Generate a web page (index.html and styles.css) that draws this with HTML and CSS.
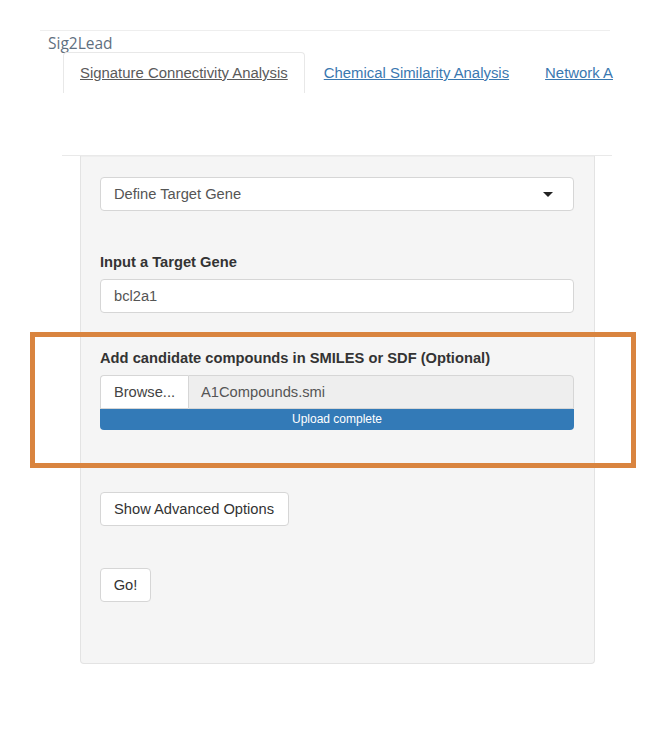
FILE: index.html
```html
<!DOCTYPE html>
<html lang="en">
<head>
<meta charset="utf-8">
<title>Sig2Lead</title>
<link rel="stylesheet" href="styles.css">
</head>
<body>
<header class="header">
  <div class="brand">Sig2Lead</div>
  <nav class="tabs">
    <a class="tab active">Signature Connectivity Analysis</a>
    <a class="tab">Chemical Similarity Analysis</a>
    <a class="tab last">Network A</a>
  </nav>
</header>
<div class="divider"></div>
<main class="well">
  <div class="select">
    <span>Define Target Gene</span>
    <span class="caret"></span>
  </div>
  <label class="label label-gene">Input a Target Gene</label>
  <div class="input">bcl2a1</div>
  <label class="label label-file">Add candidate compounds in SMILES or SDF (Optional)</label>
  <div class="file-row">
    <div class="browse">Browse...</div>
    <div class="filename">A1Compounds.smi</div>
  </div>
  <div class="progress">Upload complete</div>
  <button class="btn btn-adv">Show Advanced Options</button>
  <button class="btn btn-go">Go!</button>
</main>
<div class="highlight"></div>
</body>
</html>
```
FILE: styles.css
```css
* { box-sizing: border-box; }

body {
  margin: 0;
  background: #ffffff;
  font-family: "Liberation Sans", Arial, sans-serif;
  font-size: 14.7px;
  color: #333;
  position: relative;
  min-height: 740px;
}

.header {
  margin: 30px 0 0 40px;
  width: 570px;
  border-top: 1px solid #eeeeee;
}

.brand {
  font-family: "Open Sans", "DejaVu Sans", sans-serif;
  font-size: 15.5px;
  line-height: 18px;
  padding: 3px 0 0 8px;
  color: #5f6f80;
  height: 21px;
}

.tabs {
  display: flex;
  padding-left: 23px;
  white-space: nowrap;
}

.tab {
  display: block;
  flex: none;
  padding: 10px 16px;
  line-height: 20px;
  margin-right: 2px;
  border: 1px solid transparent;
  border-bottom: none;
  border-radius: 4px 4px 0 0;
  color: #3a78b0;
  text-decoration: underline;
  font-size: 14.9px;
}

.tab.last {
  padding-right: 0;
  margin-right: 0;
}

.tab.active {
  color: #5a5a5a;
  border-color: #e8e8e8;
  background: #ffffff;
}

.divider {
  margin: 62px 0 0 62px;
  width: 550px;
  border-top: 1px solid #e9e9e9;
}

.well {
  display: block;
  margin-left: 80px;
  width: 515px;
  height: 508px;
  padding: 20px 20px 0 19px;
  background: #f5f5f5;
  border: 1px solid #e3e3e3;
  border-top: none;
  border-radius: 0 0 4px 4px;
  box-shadow: inset 0 1px 1px rgba(0,0,0,0.03);
}

.select, .input {
  height: 34px;
  background: #ffffff;
  border: 1px solid #d6d6d6;
  border-radius: 4px;
  padding: 0 20px 0 13px;
  display: flex;
  align-items: center;
  color: #555555;
}

.select {
  justify-content: space-between;
  margin-top: 1px;
  margin-bottom: 41px;
}

.caret {
  width: 0;
  height: 0;
  border-left: 5px solid transparent;
  border-right: 5px solid transparent;
  border-top: 5px solid #222;
}

.label {
  display: block;
  font-weight: bold;
  line-height: 20px;
  margin-bottom: 7px;
  color: #333;
}

.input { margin-bottom: 35px; }

.file-row {
  display: flex;
  height: 34px;
}

.browse {
  width: 88px;
  border: 1px solid #d6d6d6;
  border-right: none;
  border-radius: 4px 0 0 0;
  background: #ffffff;
  display: flex;
  align-items: center;
  justify-content: center;
  color: #444;
}

.filename {
  flex: 1;
  border: 1px solid #d6d6d6;
  border-radius: 0 4px 0 0;
  background: #eeeeee;
  display: flex;
  align-items: center;
  padding-left: 12px;
  color: #555;
}

.progress {
  height: 21px;
  background: #337ab7;
  border-radius: 0 0 4px 4px;
  color: #ffffff;
  font-size: 12px;
  line-height: 21px;
  text-align: center;
}

.btn {
  display: block;
  height: 34px;
  background: #ffffff;
  border: 1px solid #d6d6d6;
  border-radius: 4px;
  font-family: "Liberation Sans", Arial, sans-serif;
  font-size: 14.7px;
  color: #333;
  padding: 0 13px;
  text-align: left;
}

.btn-adv { margin-top: 62px; width: 189px; }
.btn-go { margin-top: 42px; width: 51px; padding: 0; text-align: center; }

.highlight {
  position: absolute;
  left: 30px;
  top: 332px;
  width: 606px;
  height: 136px;
  border: 5px solid #d9843f;
  pointer-events: none;
}
```
